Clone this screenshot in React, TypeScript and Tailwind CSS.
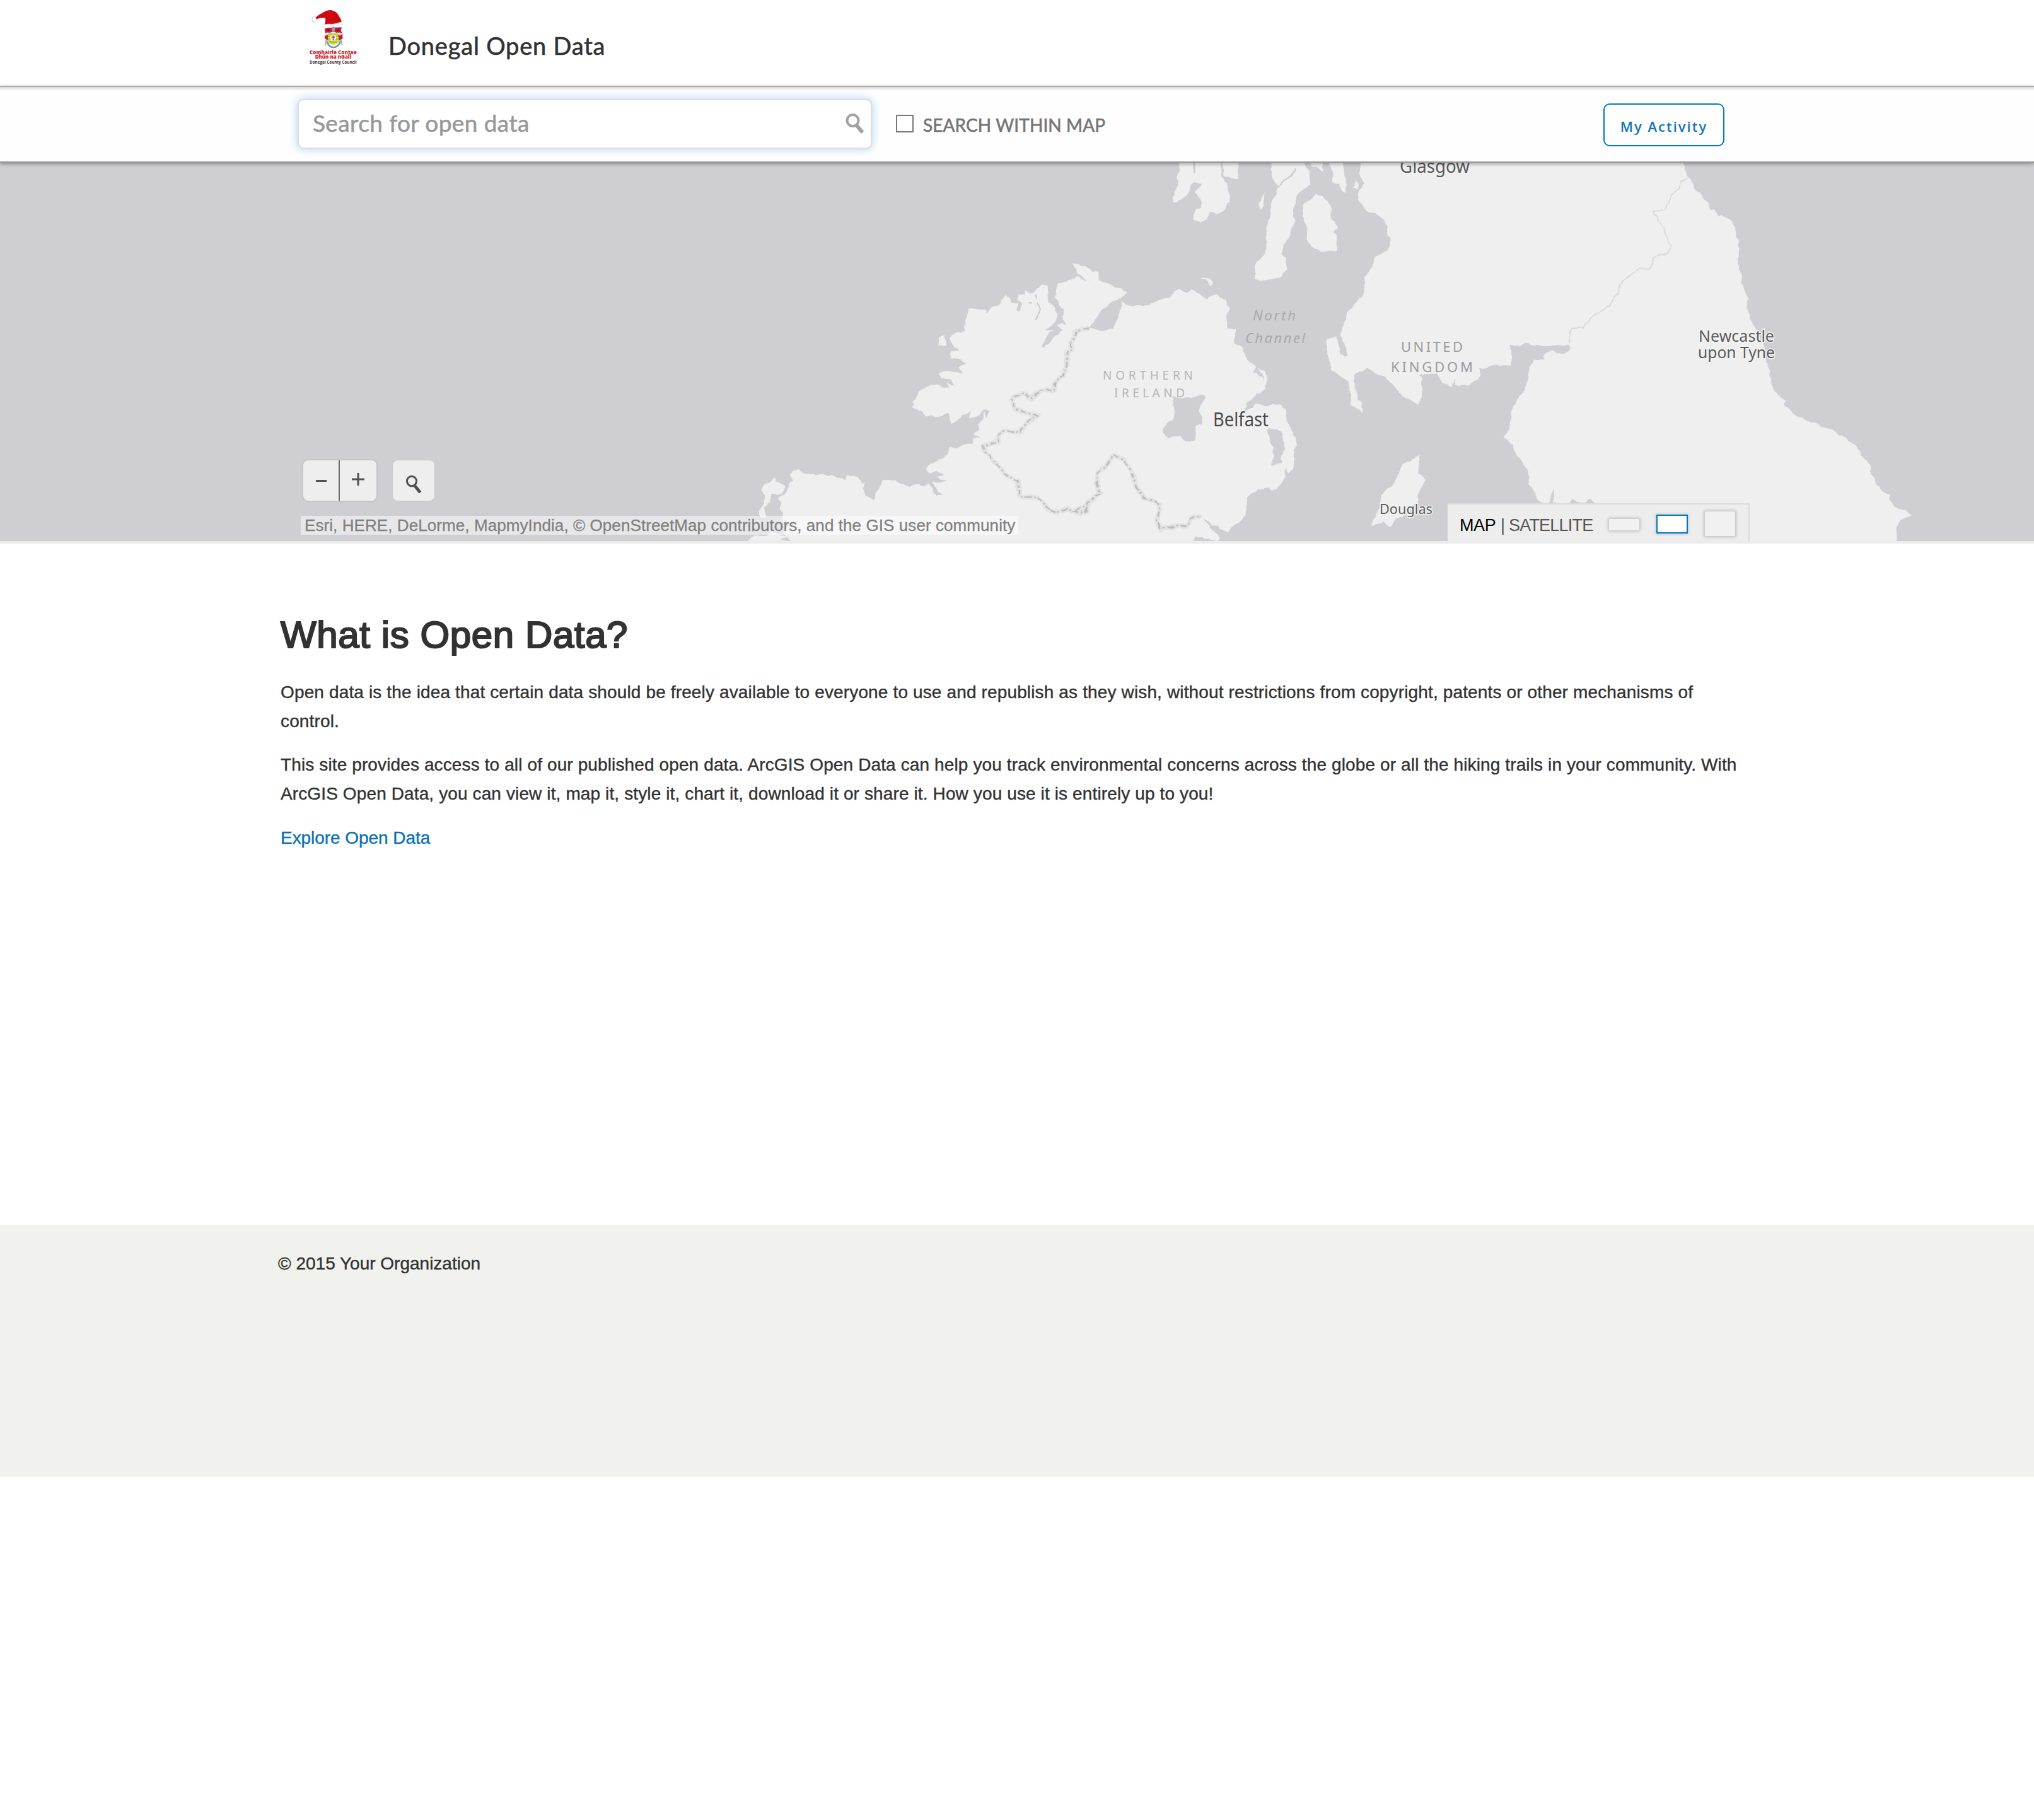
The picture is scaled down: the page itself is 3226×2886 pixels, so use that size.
const SEA = "#cfced3";
const LAND = "#efefef";

const westIreland =
  "M250 1400 L250 1374 L215 1330 L240 1290 L210 1280 L215 1240 L200 1220 L205 1190 L190 1180 L205 1158 L225 1150 L240 1100 L262 1088 L240 1062 L255 1042 L280 1035 L300 1050 L330 1052 L345 1062 L375 1055 L400 1065 L420 1060 L435 1073 L470 1080 L480 1060 L500 1062 L525 1070 L540 1100 L550 1095 L548 1135 L555 1155 L572 1165 L586 1185 L595 1160 L615 1115 L625 1082 L685 1085 L705 1105 L738 1120 L762 1100 L800 1110 L818 1102 L835 1130 L850 1158 L880 1152 L860 1140 L850 1120 L835 1095 L895 1090 L870 1080 L850 1065 L880 1055 L850 1040 L825 1050 L803 1028 L855 990 L870 985 L900 950 L905 918 L925 930 L965 912 L1000 905 L1003 888 L1028 884 L1003 870 L1025 845 L1022 820 L1045 795 L1050 760 L1060 795 L1070 755 L1050 750 L1020 775 L985 788 L990 758 L965 770 L935 800 L910 820 L905 770 L890 768 L850 785 L805 778 L795 762 L750 740 L757 720 L745 705 L765 690 L780 660 L830 630 L850 625 L875 640 L905 645 L890 620 L925 637 L912 612 L890 605 L860 582 L895 565 L960 570 L943 545 L975 530 L945 512 L910 500 L910 472 L945 466 L920 445 L908 415 L930 380 L965 375 L963 355 L973 340 L975 310 L985 268 L1010 272 L1050 272 L1060 295 L1070 268 L1110 250 L1120 215 L1135 203 L1155 220 L1160 240 L1190 245 L1180 280 L1195 285 L1208 245 L1188 230 L1190 200 L1215 205 L1220 180 L1235 195 L1265 180 L1295 150 L1308 160 L1312 225 L1335 255 L1355 300 L1345 330 L1325 345 L1305 372 L1335 370 L1320 400 L1290 450 L1310 445 L1350 400 L1358 375 L1390 378 L1350 350 L1370 335 L1388 352 L1600 600 L1600 1400 Z";
const mullet =
  "M118 1255 L116 1225 L132 1195 L140 1165 L125 1133 L137 1105 L158 1098 L176 1070 L188 1095 L226 1110 L214 1140 L195 1155 L172 1148 L160 1190 L135 1215 L145 1260 Z M65 1374 L95 1350 L140 1350 L170 1335 L215 1345 L245 1352 L200 1365 L250 1380 L250 1400 L60 1400 Z";
const arranmore = "M855 440 L862 402 L880 400 L895 442 Z";
const northIreland =
  "M238 687 L225 650 L228 620 L205 590 L190 570 L205 510 L240 505 L270 490 L280 480 L330 512 L285 470 L283 450 L262 432 L285 435 L365 465 L375 500 L410 515 L488 548 L470 570 L430 590 L385 620 L355 665 L332 690 L380 705 L430 700 L445 660 L460 640 L470 587 L500 603 L580 605 L590 590 L640 575 L670 568 L685 548 L705 538 L735 550 L755 540 L790 555 L820 575 L855 558 L895 580 L915 615 L903 650 L902 693 L945 700 L932 757 L965 775 L990 820 L1022 855 L1018 875 L1045 890 L1062 915 L1050 880 L1030 862 L1060 865 L1075 905 L1062 945 L985 1000 L972 1035 L1030 1005 L1095 1010 L1125 1005 L1150 1030 L1155 1080 L1180 1120 L1195 1170 L1182 1190 L1185 1240 L1162 1285 L1130 1240 L1150 1265 L1148 1300 L1110 1350 L1085 1362 L1075 1345 L1030 1350 L985 1385 L988 1420 L980 1462 L905 1525 L880 1515 L870 1500 L845 1500 L810 1470 L820 1490 L875 1550 L865 1562 L830 1556 L768 1542 L762 1600 L-60 1600 L-60 800 L140 775 Z";
const hebrides =
  "M705 10 L710 60 L695 75 L700 95 L680 180 L695 188 L740 150 L765 100 L805 105 L770 140 L785 160 L800 180 L800 205 L775 210 L770 250 L795 267 L820 250 L830 225 L860 230 L895 210 L917 180 L905 110 L880 70 L878 10 Z M885 10 L890 75 L945 88 L960 10 Z M1060 145 L1037 185 L1045 212 L1055 190 Z M790 495 L830 490 L845 500 L838 527 L830 510 L822 500 Z";
const kintyre =
  "M1085 10 L1088 75 L1115 115 L1110 150 L1088 180 L1085 240 L1065 290 L1065 390 L1025 430 L1022 495 L1040 503 L1120 490 L1155 450 L1148 410 L1130 395 L1150 340 L1168 310 L1183 265 L1178 210 L1195 150 L1250 110 L1245 60 L1215 10 Z M1272 150 L1310 165 L1335 200 L1340 255 L1362 280 L1345 305 L1362 325 L1360 378 L1310 385 L1265 370 L1235 325 L1237 285 L1215 240 L1228 185 L1250 170 Z M1252 10 L1255 38 L1285 42 L1303 58 L1300 10 Z M1325 10 L1342 60 L1340 100 L1368 105 L1382 140 L1397 145 L1400 110 L1382 10 Z M1440 92 L1425 125 L1448 130 Z";
const mainland =
  "M205 10 L200 60 L215 110 L193 145 L195 170 L235 220 L270 230 L310 265 L312 305 L328 330 L315 378 L262 405 L255 445 L222 480 L225 520 L215 555 L180 600 L150 625 L145 660 L125 690 L122 730 L150 800 L140 815 L122 800 L105 730 L65 740 L60 800 L80 860 L150 915 L165 960 L162 1010 L215 1040 L205 995 L195 985 L172 905 L180 885 L230 855 L265 883 L300 890 L345 935 L370 970 L440 1005 L457 985 L455 930 L460 900 L440 880 L520 880 L540 915 L580 935 L595 895 L592 920 L610 932 L645 930 L705 890 L695 855 L720 860 L765 842 L820 845 L832 820 L825 762 L860 770 L895 757 L930 768 L1000 768 L1060 763 L1075 775 L1060 795 L1040 800 L995 785 L960 805 L965 825 L930 822 L905 850 L890 935 L855 985 L828 1030 L825 1090 L797 1140 L830 1175 L898 1280 L902 1330 L945 1400 L985 1408 L1000 1350 L1006 1370 L1000 1408 L1070 1408 L1080 1392 L1100 1406 L1140 1406 L1155 1392 L1180 1408 L1180 1600 L1500 1600 L1500 10 Z M450 1215 L375 1250 L340 1330 L290 1375 L280 1430 L250 1500 L300 1485 L325 1505 L350 1470 L400 1450 L440 1400 L440 1370 L478 1310 L445 1290 Z";
const eastCoast =
  "M175 10 L200 75 L222 105 L225 120 L270 170 L300 215 L318 208 L325 240 L345 233 L380 255 L392 290 L412 340 L415 400 L404 430 L430 485 L422 515 L452 575 L445 610 L460 660 L485 700 L520 780 L525 830 L545 890 L548 930 L575 970 L607 990 L598 1005 L640 1045 L700 1075 L800 1105 L860 1150 L900 1170 L920 1215 L955 1250 L972 1310 L1000 1355 L1040 1375 L1035 1395 L1060 1420 L1130 1455 L1085 1475 L1068 1505 L1072 1600 L0 1600 L0 10 Z";
const loughs =
  "M675 975 L760 980 L800 965 L820 980 L785 1030 L805 1060 L800 1085 L775 1100 L770 1150 L735 1157 L715 1140 L660 1143 L638 1115 L645 1095 L680 1060 L685 1035 Z M1070 1110 L1085 1105 L1110 1105 L1135 1125 L1145 1190 L1128 1220 L1130 1240 L1085 1255 L1100 1220 L1098 1180 L1080 1150 Z";
const borderWest =
  "M1480 360 L1430 375 L1410 420 L1410 465 L1390 480 L1390 540 L1370 590 L1340 625 L1340 658 L1295 655 L1240 695 L1205 665 L1165 700 L1175 745 L1205 762 L1270 775 L1215 820 L1200 855 L1130 850 L1110 870 L1105 900 L1040 920 L1050 945 L1110 1020 L1150 1070 L1185 1085 L1195 1155 L1210 1165 L1270 1165 L1320 1225";
const borderEast =
  "M170 1438 L205 1448 L240 1425 L262 1442 L300 1448 L325 1440 L320 1420 L275 1440 M325 1420 L330 1400 L380 1370 L365 1325 L365 1285 L400 1260 L435 1210 L480 1235 L510 1275 L525 1335 L560 1385 L600 1395 L625 1415 L612 1480 L630 1515 L700 1500 L740 1500 L755 1470 L800 1460";

const SHEET_IRE = "translate(1160 144) scale(.38265 .33333)";
const SHEET_NI = "translate(1600 -6) scale(.38265 .38903)";
const SHEET_SCO = "translate(2080 -6) scale(.38265 .38903)";
const SHEET_ENG = "translate(2600 -6) scale(.38265 .38903)";

type Label = { t: string; x: number; y: number; w: number; s: number; c: string; i?: boolean; gaps?: boolean; halo?: boolean };
const labels: Label[] = [
  { t: "Glasgow", x: 2220, y: 18, w: 111, s: 29, c: "#58585a", halo: true },
  { t: "Belfast", x: 1924, y: 420, w: 88, s: 30, c: "#4a4a4c", halo: true },
  { t: "Newcastle", x: 2694, y: 286, w: 120, s: 26, c: "#5a5a5c", halo: true },
  { t: "upon Tyne", x: 2693, y: 312, w: 122, s: 26, c: "#5a5a5c", halo: true },
  { t: "Douglas", x: 2188, y: 559, w: 84, s: 22, c: "#5a5a5c", halo: true },
  { t: "North", x: 1987, y: 252, w: 68, s: 22, c: "#a9a9ae", i: true, gaps: true },
  { t: "Channel", x: 1975, y: 288, w: 95, s: 22, c: "#a9a9ae", i: true, gaps: true },
  { t: "NORTHERN", x: 1749, y: 346, w: 143, s: 19, c: "#b6b6b8", gaps: true },
  { t: "IRELAND", x: 1767, y: 374, w: 112, s: 19, c: "#b6b6b8", gaps: true },
  { t: "UNITED", x: 2222, y: 302, w: 98, s: 22, c: "#9c9c9f", gaps: true },
  { t: "KINGDOM", x: 2206, y: 334, w: 130, s: 22, c: "#9c9c9f", gaps: true },
];

function MapDrawing() {
  return (
    <svg className="absolute inset-0 h-full w-full" viewBox="0 0 3226 602" preserveAspectRatio="none">
      <defs>
        <filter id="coast" filterUnits="userSpaceOnUse" x="0" y="-20" width="3226" height="660">
          <feTurbulence type="fractalNoise" baseFrequency="0.07" numOctaves="2" seed="4" result="n" />
          <feDisplacementMap in="SourceGraphic" in2="n" scale="7" xChannelSelector="R" yChannelSelector="G" />
          <feGaussianBlur stdDeviation="0.6" />
        </filter>
      </defs>
      <rect width="3226" height="602" fill={SEA} />
      <g filter="url(#coast)" fill={LAND}>
        <g transform={SHEET_IRE}>
          <path d={mullet} />
          <path d={arranmore} />
          <path d={westIreland} />
          <path d="M1262 200 L1264 225 M1228 235 L1245 240 M1268 245 L1280 272 L1268 318" fill="none" stroke={SEA} strokeWidth="8" />
        </g>
        <g transform={SHEET_NI}>
          <path d={northIreland} />
          <path d={hebrides} />
          <path d={kintyre} />
          <path d={loughs} fill={SEA} />
          <path d="M768 10 L768 62 M1190 42 L1170 75 L1138 92 L1112 118" fill="none" stroke={SEA} strokeWidth="8" />
          <path d="M208 690 L205 705 L178 715 L140 772" fill="none" stroke={SEA} strokeWidth="12" />
        </g>
        <g transform={SHEET_SCO}>
          <path d={mainland} />
        </g>
        <g transform={SHEET_ENG}>
          <path d={eastCoast} />
        </g>
        <g fill="none" strokeLinejoin="round">
          <g transform={SHEET_IRE}>
            <path d={borderWest} stroke="#e3e3e3" strokeWidth="22" />
            <path d={borderWest} stroke="#bdbdbd" strokeWidth="7" strokeDasharray="24 12 8 10" />
          </g>
          <g transform={SHEET_NI}>
            <path d={borderEast} stroke="#e3e3e3" strokeWidth="20" />
            <path d={borderEast} stroke="#bdbdbd" strokeWidth="7" strokeDasharray="24 12 8 10" />
          </g>
          <g transform={SHEET_ENG} stroke="#dadada" strokeWidth="5">
            <path d="M198 80 L175 100 L160 130 L135 155 L105 213 L60 215 L80 255 L103 290 L120 345 L135 358 L120 385 L60 410 L50 445 L35 457 L0 450 L-55 490 L-85 530 L-85 560 L-105 570 L-120 600 L-180 635 L-235 695 L-280 700 L-293 760" />
          </g>
        </g>
      </g>
      <g className="font-['Noto_Sans',sans-serif]">
        {labels.map((l) => (
          <text
            key={l.t}
            x={l.x}
            y={l.y}
            fontSize={l.s}
            fill={l.c}
            fontStyle={l.i ? "italic" : "normal"}
            textLength={l.w}
            lengthAdjust={l.gaps ? "spacing" : "spacingAndGlyphs"}
            stroke={l.halo ? "#f3f3f3" : "none"}
            strokeWidth={l.halo ? 3 : 0}
            paintOrder="stroke"
          >
            {l.t}
          </text>
        ))}
      </g>
    </svg>
  );
}

function Logo() {
  return (
    <svg className="h-[100px] w-[100px]" viewBox="0 0 300 300">
      <g transform="translate(0 14) scale(1 .89)">
        <ellipse cx="145" cy="152" rx="38" ry="38" fill="#d5d9dc" />
        <path d="M104 100 L186 96 L182 112 L190 132 L190 158 L174 166 L166 140 L125 140 L118 166 L104 154 L108 128 Z" fill="#cf1830" />
        <path d="M114 106 L130 112 L124 122 Z M176 104 L160 112 L168 120 Z" fill="#5a1a22" />
        <path d="M102 132 Q116 118 130 126 Q145 114 162 126 Q176 118 190 132 L180 140 Q164 130 146 132 Q124 130 110 142 Z" fill="#e6e6ea" />
        <path d="M138 98 L146 92 L154 98 L152 118 L140 118 Z" fill="#9a9fa6" />
        <path d="M116 124 L127 119 L133 128 Z M163 123 L174 120 L176 128 Z" fill="#7d8288" />
        <path d="M116 172 Q122 202 146 204 Q172 202 180 170" fill="none" stroke="#87919a" strokeWidth="8" />
        <path d="M112 162 L108 194 M182 160 L188 192" stroke="#9aa3aa" strokeWidth="5" />
        <path d="M122 130 H168 Q178 162 162 182 Q146 194 130 182 Q114 162 122 130 Z" fill="#8fd32a" />
        <path d="M121 138 H169 M121 152 H171 M123 168 H169 M132 182 H162" stroke="#f2e230" strokeWidth="5" />
        <ellipse cx="145" cy="152" rx="15" ry="17" fill="#f6eef0" />
        <path d="M145 140 V166 M137 149 H153" stroke="#c0152d" strokeWidth="4" />
      </g>
      <g transform="translate(0 13) scale(1 .88)">
        <path d="M58 48 Q72 34 90 24 Q112 6 134 6 Q158 10 170 32 Q184 54 190 82 Q172 74 140 88 Q116 94 105 92 Q110 66 108 48 Q88 44 60 58 Z" fill="#d10a12" />
        <path d="M112 40 Q116 66 106 84 M150 20 Q160 50 176 70" fill="none" stroke="#a80810" strokeWidth="3" />
        <path d="M96 90 Q110 78 140 82 Q168 78 188 68 L192 82 Q172 90 146 93 Q120 98 104 106 Q94 102 96 90 Z" fill="#fbfbfb" stroke="#d9d9d9" strokeWidth="2" />
        <ellipse cx="55" cy="56" rx="10" ry="14" fill="#fff" stroke="#b9b9b9" strokeWidth="3" />
      </g>
      <g className="font-['Open_Sans',sans-serif]" textAnchor="middle">
        <text x="145" y="227" fontSize="27" fontWeight="800" fill="#d2232a" textLength="224" lengthAdjust="spacingAndGlyphs">Comhairle Contae</text>
        <text x="145" y="250" fontSize="25" fontWeight="800" fill="#d2232a" textLength="172" lengthAdjust="spacingAndGlyphs">Dhún na nGall</text>
        <text x="145" y="273" fontSize="20" fontWeight="700" fill="#3a3438" textLength="224" lengthAdjust="spacingAndGlyphs">Donegal County Council</text>
      </g>
    </svg>
  );
}

function Header() {
  return (
    <header className="flex h-[136px] bg-white pl-[480px] pt-[10px]">
      <Logo />
      <h1 className="ml-[36px] mt-[42px] whitespace-nowrap font-['Lato',sans-serif] text-[38px] leading-[40px] tracking-[0.8px] text-[#323232] [-webkit-text-stroke:0.6px_#323232]">
        Donegal Open Data
      </h1>
    </header>
  );
}

function SearchBar() {
  return (
    <div className="relative z-10 flex h-[122px] border-b-2 border-t-2 border-b-[#97979a] border-t-[#a9a9a9] bg-[linear-gradient(to_bottom,#dadada,#fefefe_6px)] pl-[472px] shadow-[0_2px_6px_rgba(0,0,0,0.35)]">
      <div className="mt-[19px] flex h-[79px] w-[911px] justify-between rounded-[9px] border-2 border-[#e2dcdf] bg-white pl-[22px] pr-[10px] shadow-[0_0_14px_rgba(110,180,240,0.6)]">
        <span className="mt-[16px] whitespace-nowrap font-['Lato',sans-serif] text-[37px] leading-[40px] tracking-[0.4px] text-[#999] [-webkit-text-stroke:0.6px_#999]">
          Search for open data
        </span>
        <svg className="mt-[20px] h-[36px] w-[32px]" viewBox="0 0 32 36" fill="none" stroke="#a2a2a2">
          <circle cx="13.5" cy="12" r="9" strokeWidth="4" />
          <path d="M19 19 L29 31" strokeWidth="6" />
        </svg>
      </div>
      <div className="ml-[38px] mt-[44px] h-[28px] w-[28px] border-2 border-[#777] bg-white" />
      <span className="ml-[15px] mt-[40px] w-[300px] whitespace-nowrap font-['Lato',sans-serif] text-[28px] leading-[40px] tracking-[0.1px] text-[#757575] [-webkit-text-stroke:0.6px_#757575]">
        SEARCH WITHIN MAP
      </span>
      <button className="ml-[779px] mt-[26px] flex h-[68px] w-[192px] justify-center rounded-[10px] border-2 border-[#0079c1] pt-[14px] font-['Open_Sans',sans-serif] text-[22px] font-semibold leading-[40px] tracking-[2px] text-[#1474b8]">
        My Activity
      </button>
    </div>
  );
}

function MapSection() {
  return (
    <section className="relative -mt-[2px] h-[606px] overflow-hidden border-b-4 border-[#ececec] font-['Liberation_Sans',Arial,sans-serif]">
      <MapDrawing />
      <div className="absolute left-[481px] top-[474px] flex gap-[26px]">
        <div className="flex h-[64px] w-[116px] rounded-[8px] bg-[#eeeeee] shadow-[0_0_2px_2px_rgba(0,0,0,0.05)]">
          <div className="flex w-[58px] items-center justify-center border-r-2 border-[#6a6a6a]">
            <div className="h-[3px] w-[17px] bg-[#505050]" />
          </div>
          <div className="flex w-[58px] justify-center pt-[19px]">
            <svg className="h-[22px] w-[22px]" viewBox="0 0 22 22" stroke="#505050" strokeWidth="3">
              <path d="M1 11 H21 M11 1 V21" />
            </svg>
          </div>
        </div>
        <div className="h-[64px] w-[66px] rounded-[8px] bg-[#eeeeee] pl-[19px] pt-[22px] shadow-[0_0_2px_1px_rgba(0,0,0,0.03)]">
          <svg className="h-[34px] w-[30px]" viewBox="0 0 30 34" fill="none" stroke="#4f4f4f">
            <ellipse cx="11" cy="11" rx="7.5" ry="7.8" strokeWidth="3" />
            <path d="M16 18.5 L24.5 29" strokeWidth="5" />
          </svg>
        </div>
      </div>
      <div className="absolute left-[477px] top-[562px] h-[30px] w-[1138px] whitespace-nowrap bg-white/50 pl-[6px] text-[26px] leading-[30px] tracking-[0.08px] text-[#808082] [-webkit-text-stroke:0.3px_#808082]">
        Esri, HERE, DeLorme, MapmyIndia, © OpenStreetMap contributors, and the GIS user community
      </div>
      <div className="absolute left-[2296px] top-[542px] flex h-[60px] w-[479px] border-r-2 border-t-2 border-[#dcdcdd] bg-[#ededed] pl-[19px] text-[27px] leading-[40px]">
        <span className="mt-[13px] w-[61px] tracking-[-0.4px] text-black">MAP</span>
        <span className="mt-[13px] w-[17px] pl-[4px] text-[#555]">|</span>
        <span className="mt-[13px] w-[133px] tracking-[-0.8px] text-[#555]">SATELLITE</span>
        <div className="ml-[26px] mt-[23px] h-[18px] w-[48px] rounded-[2px] bg-[#f1f1f1] shadow-[0_0_4px_2px_#c2c2c3]" />
        <div className="ml-[27px] mt-[16px] h-[30px] w-[50px] border-2 border-[#0079c1] bg-white shadow-[0_0_4px_1px_#c4c4c4]" />
        <div className="ml-[27px] mt-[11px] h-[39px] w-[48px] rounded-[2px] bg-[#f1f1f1] shadow-[0_0_4px_2px_#c2c2c3]" />
      </div>
    </section>
  );
}

export default function App() {
  return (
    <div className="min-h-[2886px] w-[3226px] bg-white font-['Liberation_Sans',Arial,sans-serif]">
      <Header />
      <SearchBar />
      <MapSection />
      <main className="h-[1080px] pl-[445px] pt-[109px] text-[28px] leading-[46px] tracking-[0.14px] text-[#323232]">
        <h2 className="text-[60px] leading-[72px] tracking-[0.6px] [-webkit-text-stroke:2.2px_#323232]">What is Open Data?</h2>
        <p className="mt-[32px] whitespace-nowrap [-webkit-text-stroke:0.4px_#323232]">
          Open data is the idea that certain data should be freely available to everyone to use and republish as they wish, without restrictions from copyright, patents or other mechanisms of
          <br />
          control.
        </p>
        <p className="mt-[23px] whitespace-nowrap tracking-[0.12px] [-webkit-text-stroke:0.4px_#323232]">
          This site provides access to all of our published open data. ArcGIS Open Data can help you track environmental concerns across the globe or all the hiking trails in your community. With
          <br />
          ArcGIS Open Data, you can view it, map it, style it, chart it, download it or share it. How you use it is entirely up to you!
        </p>
        <a className="mt-[24px] inline-block tracking-[-0.05px] text-[#0b71b4] [-webkit-text-stroke:0.4px_#0b71b4]">Explore Open Data</a>
      </main>
      <footer className="h-[400px] bg-[#f1f2ed] pl-[441px] pt-[39px] text-[28px] leading-[46px] text-[#323232] [-webkit-text-stroke:0.4px_#323232]">
        © 2015 Your Organization
      </footer>
    </div>
  );
}
